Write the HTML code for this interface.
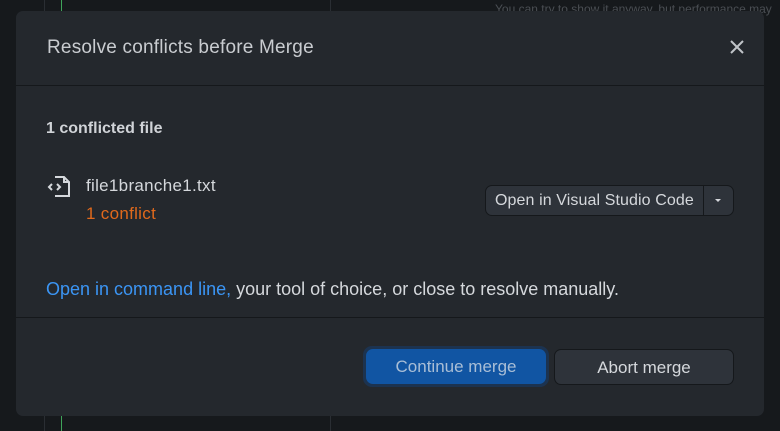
<!DOCTYPE html>
<html><head><meta charset="utf-8"><style>
*{margin:0;padding:0;box-sizing:border-box}
body{width:780px;height:431px;background:#16191c;font-family:"Liberation Sans",sans-serif;position:relative;overflow:hidden;color:#d5d8dc}
.vl{position:absolute;top:0;height:431px;width:1px;background:#2a2e33}
.dlg{position:absolute;left:16px;top:11px;width:748px;height:405px;background:#24282d;border-radius:7px}
.title{position:absolute;left:31px;top:26px;font-size:19px;color:#c9ccd0;letter-spacing:0.2px}
.x{position:absolute;left:712px;top:27px}
.hr{position:absolute;left:0;width:748px;height:1px;background:#15181b}
.b{position:absolute;font-size:16px}
.btn{position:absolute;border-radius:7px;font-size:17px;text-align:center}
</style></head><body>
<div class="vl" style="left:44px"></div>
<div class="vl" style="left:61px;background:#3fa45a"></div>
<div class="vl" style="left:330px"></div>
<div style="position:absolute;left:495px;top:2px;font-size:12px;color:#4a4e53">You can try to show it anyway, but performance may</div>
<div class="dlg">
<div class="title">Resolve conflicts before Merge</div>
<svg class="x" width="18" height="18" viewBox="0 0 18 18"><path d="M3 3L15 15M15 3L3 15" stroke="#c0c4c8" stroke-width="2"/></svg>
<div class="hr" style="top:74px"></div>
<div class="b" style="left:30px;top:109px;font-weight:bold;color:#d0d3d7">1 conflicted file</div>
<svg style="position:absolute;left:30px;top:163px" width="26" height="24" viewBox="0 0 26 24"><path d="M9 3h9l5 5v14H9" fill="none" stroke="#d5d8dc" stroke-width="2"/><path d="M18 3v5h5" fill="none" stroke="#d5d8dc" stroke-width="2"/><path d="M6 10l-3 3 3 3M11 10l3 3-3 3" fill="none" stroke="#d5d8dc" stroke-width="2"/></svg>
<div class="b" style="left:70px;top:165px;font-size:17px;color:#d5d8dc;letter-spacing:0.3px">file1branche1.txt</div>
<div class="b" style="left:70px;top:193px;font-size:17px;color:#e0691c;letter-spacing:0.3px">1 conflict</div>
<div style="position:absolute;left:469px;top:174px;width:249px;height:31px;background:#2e333a;border:1px solid #15181b;border-radius:7px">
<div style="position:absolute;left:9px;top:6px;font-size:16px;color:#d5d8dc;letter-spacing:0.1px">Open in Visual Studio Code</div>
<div style="position:absolute;left:217px;top:0;width:1px;height:29px;background:#15181b"></div>
<div style="position:absolute;left:229px;top:13px;border-left:3px solid transparent;border-right:3px solid transparent;border-top:3px solid #d5d8dc"></div>
</div>
<div class="b" style="left:30px;top:268px;font-size:18px;color:#d5d8dc"><span style="color:#3b95f4">Open in command line,</span> your tool of choice, or close to resolve manually.</div>
<div class="hr" style="top:306px"></div>
<div style="position:absolute;left:347px;top:335px;width:186px;height:41px;border-radius:9px;background:#1c3350"></div>
<div class="btn" style="left:350px;top:338px;width:180px;height:35px;background:#1155a3;color:#a9bed6;line-height:36px">Continue merge</div>
<div class="btn" style="left:538px;top:338px;width:180px;height:36px;background:#2e333a;border:1px solid #15181b;color:#d5d8dc;line-height:35px">Abort merge</div>
</div>
</body></html>
